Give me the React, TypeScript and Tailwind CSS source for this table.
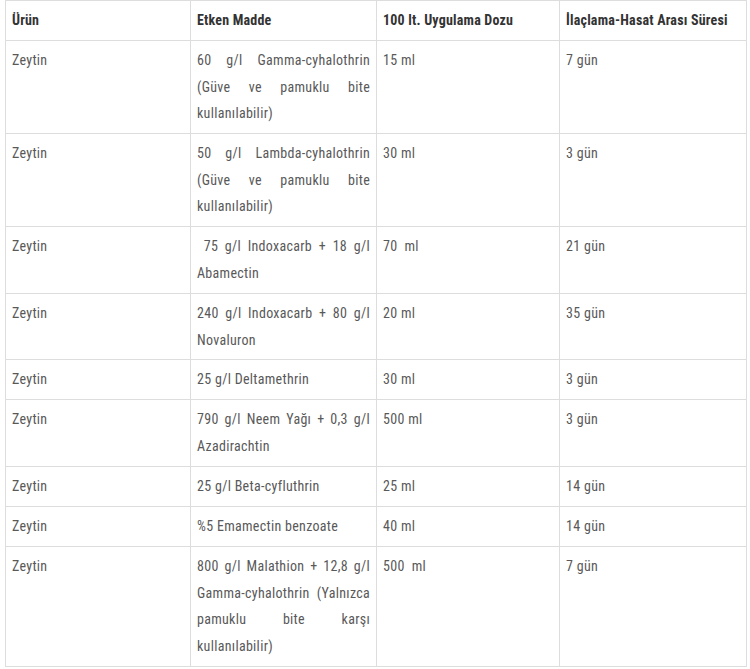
const rows: [string, string, string, string][] = [
  ["Zeytin", "60 g/l Gamma-cyhalothrin (Güve ve pamuklu bite kullanılabilir)", "15 ml", "7 gün"],
  ["Zeytin", "50 g/l Lambda-cyhalothrin (Güve ve pamuklu bite kullanılabilir)", "30 ml", "3 gün"],
  ["Zeytin", "\u00a075 g/l Indoxacarb + 18 g/l Abamectin", "70  ml", "21 gün"],
  ["Zeytin", "240 g/l Indoxacarb + 80 g/l Novaluron", "20 ml", "35 gün"],
  ["Zeytin", "25 g/l Deltamethrin", "30 ml", "3 gün"],
  ["Zeytin", "790 g/l Neem Yağı + 0,3 g/l Azadirachtin", "500 ml", "3 gün"],
  ["Zeytin", "25 g/l Beta-cyfluthrin", "25 ml", "14 gün"],
  ["Zeytin", "%5 Emamectin benzoate", "40 ml", "14 gün"],
  ["Zeytin", "800 g/l Malathion + 12,8 g/l Gamma-cyhalothrin (Yalnızca pamuklu bite karşı kullanılabilir)", "500  ml", "7 gün"],
];

const headers = ["Ürün", "Etken Madde", "100 lt. Uygulama Dozu", "İlaçlama-Hasat Arası Süresi"];

const cell = "border border-[#dddddd] px-[6px] pt-[6px] pb-[6.4px] align-top";

export default function App() {
  return (
    <div className="w-[750px] h-[669px] bg-white overflow-hidden pl-[5px] font-['Roboto_Condensed','Roboto',sans-serif] font-stretch-condensed">
      <table className="table-fixed border-collapse w-[741px] text-[14px] leading-[26.6px]">
        <colgroup>
          <col className="w-[185px]" />
          <col className="w-[186px]" />
          <col className="w-[183px]" />
          <col className="w-[187px]" />
        </colgroup>
        <thead>
          <tr>
            {headers.map((h) => (
              <th key={h} className={`${cell} text-left font-bold tracking-[0.2px] text-[#333333]`}>
                {h}
              </th>
            ))}
          </tr>
        </thead>
        <tbody className="tracking-[0.3px] text-[#595959]">
          {rows.map((r, i) => (
            <tr key={i}>
              <td className={cell}>{r[0]}</td>
              <td className={`${cell} text-justify whitespace-pre-wrap`}>{r[1]}</td>
              <td className={`${cell} whitespace-pre-wrap`}>{r[2]}</td>
              <td className={cell}>{r[3]}</td>
            </tr>
          ))}
        </tbody>
      </table>
    </div>
  );
}
